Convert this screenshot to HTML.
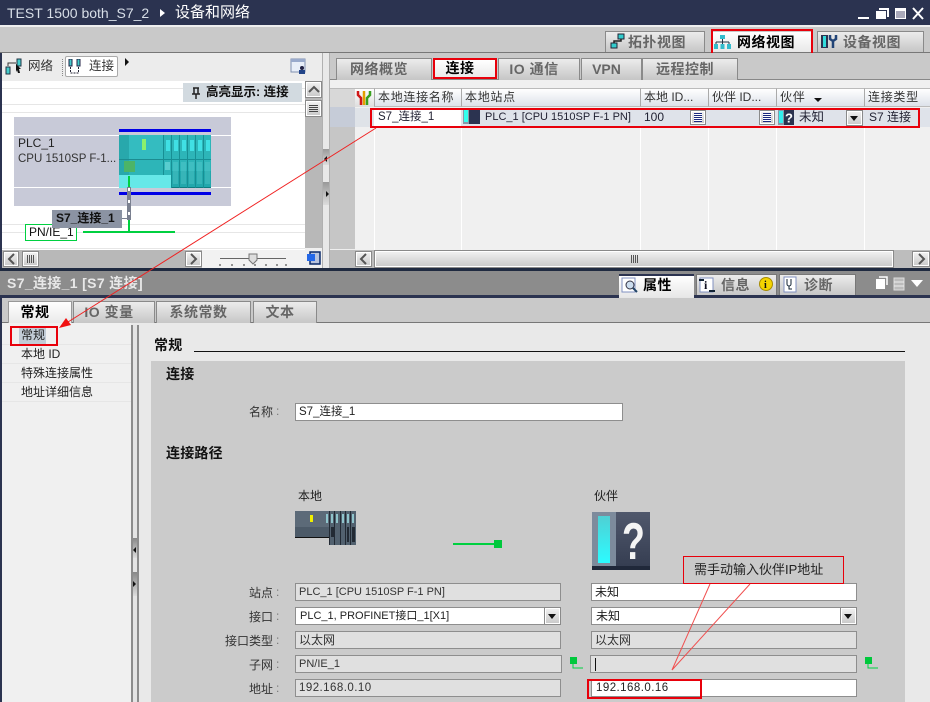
<!DOCTYPE html>
<html><head><meta charset="utf-8"><style>
*{box-sizing:border-box}
html,body{margin:0;padding:0}
body{width:930px;height:702px;overflow:hidden;position:relative;background:#e8e8e8;font:12px "Liberation Sans","WenQuanYi Zen Hei","Noto Sans CJK SC",sans-serif;color:#222}
.a,.t{position:absolute}
.t{white-space:nowrap;line-height:16px}
.tab{position:absolute;border:2px solid #8a8a8a;border-bottom:none;background:linear-gradient(#ececec,#c6c6c6);color:#666;font-weight:bold;font-size:14px;text-align:center;line-height:20px;white-space:nowrap;letter-spacing:.5px;padding-right:10px}
.on{background:linear-gradient(#fff,#e8e8e8);color:#000}
.fld{position:absolute;height:18px;border:1px solid #8e8e8e;background:#e0e0e0;line-height:16px;padding-left:3px;font-size:11px;white-space:nowrap;color:#333}
.w{background:#fff;color:#222}
.btn{position:absolute;background:linear-gradient(#f2f2f2,#c8c8c8);border:1px solid #8a8a8a;box-shadow:inset 0 0 0 1px #fff}
.hd{position:absolute;top:88px;height:19px;background:linear-gradient(#fff,#dde2ea);border-left:1px solid #aaa;border-top:1px solid #bbb;border-bottom:1px solid #bbb;line-height:17px;padding-left:3px;white-space:nowrap;color:#333;font-size:12px;letter-spacing:.3px}
.r{position:absolute;background:#ced4de}
.lb{position:absolute;left:190px;width:83px;text-align:right;line-height:16px;font-size:12px;color:#333;white-space:nowrap}
.c{position:absolute;left:276px;line-height:16px;font-size:12px;color:#777}
.n{font-size:11.5px;letter-spacing:.45px}
</style></head><body>

<!-- title bar -->
<div class="a" style="left:0;top:0;width:930px;height:25px;background:#2b3350"></div>
<div class="t" style="left:7px;top:5px;color:#d8dfe8;font-size:14px">TEST 1500 both_S7_2</div>
<div class="a" style="left:160px;top:9px;width:0;height:0;border-left:5px solid #fff;border-top:4px solid transparent;border-bottom:4px solid transparent"></div>
<div class="t" style="left:175px;top:5px;color:#fff;font-size:15px">设备和网络</div>
<svg class="a" style="left:850px;top:4px" width="80" height="18"><rect x="8" y="13" width="11" height="2" fill="#fff"/><rect x="26" y="7" width="10" height="8" fill="#fff"/><path d="M29 5h9v8" fill="none" stroke="#fff" stroke-width="2"/><rect x="45" y="4" width="11" height="11" fill="#fff"/><rect x="46" y="7" width="9" height="7" fill="#aab"/><path d="M63 4l10 11M73 4L63 15" stroke="#fff" stroke-width="2"/></svg>

<!-- top toolbar -->
<div class="a" style="left:0;top:25px;width:930px;height:2px;background:#eee"></div>
<div class="a" style="left:0;top:27px;width:930px;height:26px;background:#c9c9c9;border-bottom:1px solid #777"></div>
<div class="tab" style="left:605px;top:31px;width:100px;height:21px;padding:0 0 0 22px;text-align:left;border-width:1px 1px 0">拓扑视图</div>
<div class="tab on" style="left:713px;top:32px;width:98px;height:20px;padding:0 0 0 24px;text-align:left;border:0">网络视图</div>
<div class="tab" style="left:817px;top:31px;width:107px;height:21px;padding:0 0 0 25px;text-align:left;border-width:1px 1px 0">设备视图</div>
<svg class="a" style="left:610px;top:33px" width="20" height="16"><rect x="8" y="1" width="6" height="5" fill="#3cc" stroke="#223"/><rect x="1" y="10" width="6" height="5" fill="#3cc" stroke="#223"/><path d="M11 6v2H4v2" stroke="#222" fill="none" stroke-width="1.500"/></svg>
<svg class="a" style="left:714px;top:34px" width="18" height="16"><rect x="6" y="1" width="5" height="4" fill="#3bc"/><path d="M8.500 5v3M2 8h13M2 8v2M8.500 8v2M15 8v2" stroke="#234" fill="none"/><rect x="0" y="10" width="4" height="5" fill="#3bc"/><rect x="6.500" y="10" width="4" height="5" fill="#3bc"/><rect x="13" y="10" width="4" height="5" fill="#3bc"/></svg>
<svg class="a" style="left:821px;top:34px" width="18" height="15"><rect x="0" y="1" width="7" height="13" fill="#2b3350"/><rect x="2" y="2" width="3" height="11" fill="#3dd"/><path d="M9 1v4l3 2 3-2V1M12 7v7" stroke="#247" stroke-width="2.500" fill="none"/></svg>
<div class="a" style="left:711px;top:29px;width:102px;height:26px;border:2px solid #e8000b"></div>

<!-- left panel -->
<div class="a" style="left:0;top:53px;width:2px;height:217px;background:#2b3350"></div>
<div class="a" style="left:2px;top:53px;width:320px;height:28px;background:#ececec"></div>
<svg class="a" style="left:5px;top:58px" width="18" height="17"><rect x="12" y="1" width="4" height="7" fill="#4cc" stroke="#234"/><rect x="1" y="9" width="4" height="7" fill="#4cc" stroke="#234"/><path d="M3 8V5h8" stroke="#333" fill="none"/><path d="M11 6l5 5-2 0 1 4-2 0-1-3-1 2z" fill="#111"/></svg>
<div class="t" style="left:28px;top:58px;color:#333;font-size:12.500px">网络</div>
<div class="a" style="left:62px;top:59px;height:17px;border-left:1px dotted #888"></div>
<div class="a" style="left:65px;top:56px;width:53px;height:21px;background:#fff;border:1px solid #aaa;border-radius:2px"></div>
<svg class="a" style="left:68px;top:59px" width="14" height="16"><rect x="1" y="0" width="3" height="7" fill="#4cc" stroke="#224"/><rect x="9" y="0" width="3" height="7" fill="#4cc" stroke="#224"/><path d="M2.500 8v6M10.500 8v6M2.500 14h8" stroke="#223" stroke-dasharray="2 1" fill="none"/></svg>
<div class="t" style="left:89px;top:58px;color:#333;font-size:12.500px">连接</div>
<div class="a" style="left:125px;top:58px;width:0;height:0;border-left:4px solid #111;border-top:4px solid transparent;border-bottom:4px solid transparent"></div>
<svg class="a" style="left:290px;top:58px" width="18" height="18"><rect x="1" y="1" width="14" height="13" fill="#e8eef8" stroke="#8090b0"/><rect x="1" y="1" width="14" height="3" fill="#99aacc"/><circle cx="12" cy="10" r="2" fill="#224"/><rect x="9" y="12" width="6" height="4" fill="#248"/></svg>

<div class="a" style="left:2px;top:81px;width:303px;height:169px;background:#fff"></div>
<div class="a" style="left:2px;top:88px;width:303px;height:1px;background:#e6e6e6"></div>
<div class="a" style="left:2px;top:104px;width:303px;height:1px;background:#e6e6e6"></div>
<div class="a" style="left:2px;top:112px;width:303px;height:1px;background:#e6e6e6"></div>
<div class="a" style="left:2px;top:224px;width:303px;height:1px;background:#e6e6e6"></div>
<div class="a" style="left:2px;top:232px;width:303px;height:1px;background:#e6e6e6"></div>
<div class="a" style="left:2px;top:248px;width:303px;height:1px;background:#e6e6e6"></div>

<div class="a" style="left:183px;top:83px;width:119px;height:19px;background:#d2dae0"></div>
<svg class="a" style="left:189px;top:86px" width="14" height="14"><path d="M4 2h6M5 2v6M9 2v6M3 8h8M7 8v5" stroke="#222" stroke-width="1.500" fill="none"/></svg>
<div class="t" style="left:206px;top:84px;font-weight:bold;color:#111;font-size:12.500px">高亮显示: 连接</div>

<!-- plc -->
<div class="a" style="left:14px;top:117px;width:217px;height:89px;background:#c8cad8"></div>
<div class="a" style="left:14px;top:135px;width:217px;height:1px;background:#fff"></div>
<div class="a" style="left:14px;top:187px;width:217px;height:1px;background:#fff"></div>
<div class="t" style="left:18px;top:135px;font-size:12px;color:#222">PLC_1</div>
<div class="t" style="left:18px;top:151px;font-size:11.500px;color:#333">CPU 1510SP F-1...</div>
<svg class="a" style="left:119px;top:129px" width="93" height="66">
<rect x="0" y="0" width="92" height="3" fill="#0000e6"/><rect x="0" y="63" width="92" height="3" fill="#0000e6"/>
<rect x="0" y="6" width="92" height="53" fill="#2db5b8"/>
<rect x="0" y="6" width="10" height="53" fill="#28a8ac"/><rect x="10" y="6" width="34" height="24" fill="#34bcc0"/>
<rect x="23" y="10" width="4" height="11" fill="#8cf06c"/>
<rect x="0" y="30" width="52" height="1" fill="#1c8c90"/>
<rect x="5" y="32" width="11" height="11" fill="#4cb468"/>
<rect x="0" y="46" width="52" height="13" fill="#66e8e8"/>
<rect x="52" y="42" width="40" height="17" fill="#22a8ac"/>
<rect x="52" y="58" width="40" height="1" fill="#0e7c80"/>
<g fill="#40e0e4"><rect x="47" y="11" width="4" height="11"/><rect x="55" y="11" width="4" height="11"/><rect x="63" y="11" width="4" height="11"/><rect x="71" y="11" width="4" height="11"/><rect x="79" y="11" width="4" height="11"/><rect x="87" y="11" width="4" height="11"/></g>
<g fill="#178f94"><rect x="44" y="6" width="1" height="40"/><rect x="52" y="6" width="1" height="53"/><rect x="60" y="6" width="1" height="53"/><rect x="68" y="6" width="1" height="53"/><rect x="76" y="6" width="1" height="53"/><rect x="84" y="6" width="1" height="53"/><rect x="44" y="30" width="48" height="1"/></g>
<g fill="#7dd"><rect x="46" y="33" width="5" height="8" opacity=".6"/><rect x="54" y="33" width="5" height="22" opacity=".25"/><rect x="62" y="33" width="5" height="22" opacity=".25"/><rect x="70" y="33" width="5" height="22" opacity=".25"/><rect x="78" y="33" width="5" height="22" opacity=".25"/><rect x="86" y="33" width="5" height="22" opacity=".25"/></g>
</svg>
<div class="a" style="left:128px;top:176px;width:2px;height:56px;background:#00d040"></div>
<div class="a" style="left:127px;top:187px;width:4px;height:33px;background:repeating-linear-gradient(#fff 0 3px,#7a8090 3px 12px);border:1px solid #7a8090"></div>
<div class="a" style="left:122px;top:218px;width:6px;height:1px;background:#7a8090"></div>
<div class="a" style="left:83px;top:231px;width:92px;height:2px;background:#00d040"></div>
<div class="t" style="left:25px;top:224px;width:52px;height:17px;background:#fff;border:1px solid #00d040;line-height:15px;padding-left:3px;color:#111;font-size:12px">PN/IE_1</div>
<div class="t" style="left:52px;top:210px;width:70px;height:18px;background:#8b93a3;padding-left:4px;line-height:17px;font-weight:bold;color:#111;font-size:12px">S7_连接_1</div>

<!-- left scrollbars -->
<div class="a" style="left:305px;top:81px;width:17px;height:187px;background:#b8b8b8"></div>
<div class="btn" style="left:305px;top:81px;width:17px;height:17px"></div>
<svg class="a" style="left:308px;top:85px" width="12" height="9"><path d="M1 7l5-5 5 5" stroke="#555" stroke-width="2" fill="none"/></svg>
<div class="btn" style="left:305px;top:100px;width:17px;height:17px"></div>
<div class="a" style="left:309px;top:105px;width:9px;height:7px;background:repeating-linear-gradient(#444 0 1px,transparent 1px 2px)"></div>
<div class="a" style="left:2px;top:250px;width:303px;height:18px;background:#b8b8b8"></div>
<div class="a" style="left:305px;top:248px;width:17px;height:20px;background:#f0f0f0"></div>
<div class="btn" style="left:3px;top:251px;width:16px;height:16px"></div>
<svg class="a" style="left:7px;top:253px" width="9" height="12"><path d="M7 1L2 6l5 5" stroke="#555" stroke-width="2" fill="none"/></svg>
<div class="btn" style="left:22px;top:251px;width:17px;height:16px"></div>
<div class="a" style="left:27px;top:255px;width:7px;height:8px;background:repeating-linear-gradient(90deg,#555 0 1px,transparent 1px 2px)"></div>
<div class="btn" style="left:185px;top:251px;width:17px;height:16px"></div>
<svg class="a" style="left:189px;top:253px" width="9" height="12"><path d="M2 1l5 5-5 5" stroke="#555" stroke-width="2" fill="none"/></svg>
<div class="a" style="left:202px;top:250px;width:103px;height:18px;background:#f2f2f2"></div>
<svg class="a" style="left:218px;top:250px" width="70" height="18"><path d="M2 8.500h66" stroke="#666"/><path d="M2 14v2M14 14v2M26 14v2M37 14v2M48 14v2M59 14v2M68 14v2" stroke="#333"/><path d="M31 4h8v6l-4 4-4-4z" fill="#ddd" stroke="#777"/></svg>
<svg class="a" style="left:306px;top:251px" width="15" height="15"><rect x="4" y="1" width="10" height="12" fill="#b9c4dd" stroke="#0a2a6a" stroke-width="1.500"/><rect x="1" y="3" width="8" height="7" fill="#2468e8"/></svg>

<!-- divider -->
<div class="a" style="left:322px;top:53px;width:8px;height:215px;background:#e8e8e8;border-left:1px solid #b0b0b0;border-right:1px solid #b0b0b0"></div>
<div class="a" style="left:323px;top:149px;width:6px;height:16px;background:linear-gradient(#999,#ddd)"></div>
<div class="a" style="left:323px;top:182px;width:6px;height:23px;background:linear-gradient(#999,#ddd)"></div>
<div class="a" style="left:324px;top:156px;width:0;height:0;border-right:3px solid #111;border-top:3px solid transparent;border-bottom:3px solid transparent"></div>
<div class="a" style="left:326px;top:191px;width:0;height:0;border-left:3px solid #111;border-top:3px solid transparent;border-bottom:3px solid transparent"></div>

<!-- right panel -->
<div class="a" style="left:330px;top:53px;width:600px;height:27px;background:#c9c9c9;border-bottom:1px solid #888"></div>
<div class="tab" style="left:336px;top:58px;width:96px;height:22px;border-width:1px 1px 0">网络概览</div>
<div class="tab on" style="left:435px;top:60px;width:60px;height:19px;line-height:17px;border:0">连接</div>
<div class="tab" style="left:498px;top:58px;width:82px;height:22px;border-width:1px 1px 0">IO 通信</div>
<div class="tab" style="left:581px;top:58px;width:61px;height:22px;border-width:1px 1px 0;letter-spacing:0">VPN</div>
<div class="tab" style="left:642px;top:58px;width:96px;height:22px;border-width:1px 1px 0">远程控制</div>
<div class="a" style="left:433px;top:58px;width:64px;height:21px;border:2px solid #e8000b"></div>

<div class="a" style="left:330px;top:80px;width:600px;height:170px;background:#f0f0f0"></div>
<div class="a" style="left:330px;top:88px;width:25px;height:19px;background:#d8d8d8;border-top:1px solid #bbb"></div>
<div class="a" style="left:355px;top:88px;width:19px;height:19px;background:linear-gradient(#fff,#ddd);border-top:1px solid #bbb"></div>
<svg class="a" style="left:356px;top:90px" width="16" height="16"><path d="M2 1v4l3 3v7" stroke="#d01818" stroke-width="2.500" fill="none"/><path d="M8 1v5l0 9" stroke="#e4a000" stroke-width="2.500" fill="none"/><path d="M14 1v4l-3 3v7" stroke="#38a020" stroke-width="2.500" fill="none"/></svg>
<div class="hd" style="left:374px;width:87px;letter-spacing:.7px">本地连接名称</div>
<div class="hd" style="left:461px;width:179px;letter-spacing:.7px">本地站点</div>
<div class="hd" style="left:640px;width:68px;letter-spacing:0">本地 ID...</div>
<div class="hd" style="left:708px;width:68px;letter-spacing:0">伙伴 ID...</div>
<div class="hd" style="left:776px;width:88px;letter-spacing:.7px">伙伴</div>
<div class="a" style="left:814px;top:98px;width:0;height:0;border-top:4px solid #111;border-left:4px solid transparent;border-right:4px solid transparent"></div>
<div class="hd" style="left:864px;width:66px;letter-spacing:.7px">连接类型</div>
<div class="r" style="left:355px;top:108px;width:19px;height:19px;background:#dfe3e8"></div>
<div class="r" style="left:374px;top:108px;width:87px;height:19px;background:#fff"></div>
<div class="r" style="left:461px;top:108px;width:469px;height:19px;background:#dfe3ea"></div>
<div class="t" style="left:378px;top:109px;color:#223;font-size:11.500px">S7_连接_1</div>
<svg class="a" style="left:463px;top:109px" width="17" height="15"><rect width="17" height="15" fill="#2b3350"/><rect width="6" height="15" fill="#8a98a8"/><rect x="1" y="1" width="4" height="12" fill="#3fe"/></svg>
<div class="t" style="left:485px;top:109px;font-size:11px;color:#223">PLC_1 [CPU 1510SP F-1 PN]</div>
<div class="t" style="left:644px;top:109px;color:#223">100</div>
<div class="btn" style="left:690px;top:110px;width:16px;height:15px"></div>
<div class="a" style="left:694px;top:113px;width:8px;height:9px;background:repeating-linear-gradient(#1a2a80 0 1px,#fff 1px 2px)"></div>
<div class="btn" style="left:759px;top:110px;width:16px;height:15px"></div>
<div class="a" style="left:763px;top:113px;width:8px;height:9px;background:repeating-linear-gradient(#1a2a80 0 1px,#fff 1px 2px)"></div>
<svg class="a" style="left:778px;top:110px" width="16" height="15"><rect width="16" height="15" fill="#2b3350"/><rect width="6" height="15" fill="#8a98a8"/><rect x="1" y="1" width="4" height="12" fill="#3ee"/><text x="7" y="12.500" font-size="13" font-weight="bold" fill="#fff" font-family="Liberation Sans">?</text></svg>
<div class="t" style="left:799px;top:109px;color:#223;font-size:12.500px">未知</div>
<div class="btn" style="left:846px;top:110px;width:17px;height:16px"></div>
<div class="a" style="left:850px;top:116px;width:0;height:0;border-top:5px solid #111;border-left:4px solid transparent;border-right:4px solid transparent"></div>
<div class="t" style="left:869px;top:109px;color:#223">S7 连接</div>
<div class="a" style="left:374px;top:127px;width:1px;height:123px;background:#fff"></div>
<div class="a" style="left:461px;top:127px;width:1px;height:123px;background:#fff"></div>
<div class="a" style="left:640px;top:127px;width:1px;height:123px;background:#fff"></div>
<div class="a" style="left:708px;top:127px;width:1px;height:123px;background:#fff"></div>
<div class="a" style="left:776px;top:127px;width:1px;height:123px;background:#fff"></div>
<div class="a" style="left:864px;top:127px;width:1px;height:123px;background:#fff"></div>

<div class="a" style="left:330px;top:107px;width:25px;height:161px;background:#c6c6c6;border-top:20px solid #c6ccd8"></div>
<div class="a" style="left:370px;top:108px;width:550px;height:20px;border:2px solid #e8000b"></div>
<div class="a" style="left:330px;top:250px;width:600px;height:18px;background:#bdbdbd"></div>
<div class="a" style="left:330px;top:249px;width:25px;height:1px;background:#eee"></div>
<div class="btn" style="left:355px;top:251px;width:17px;height:16px"></div>
<svg class="a" style="left:359px;top:253px" width="9" height="12"><path d="M7 1L2 6l5 5" stroke="#555" stroke-width="2" fill="none"/></svg>
<div class="btn" style="left:374px;top:250px;width:520px;height:18px"></div>
<div class="a" style="left:631px;top:255px;width:7px;height:8px;background:repeating-linear-gradient(90deg,#555 0 1px,transparent 1px 2px)"></div>
<div class="btn" style="left:912px;top:251px;width:18px;height:16px"></div>
<svg class="a" style="left:917px;top:253px" width="9" height="12"><path d="M2 1l5 5-5 5" stroke="#555" stroke-width="2" fill="none"/></svg>

<!-- inspector -->
<div class="a" style="left:0;top:268px;width:930px;height:3px;background:#1f2a40"></div>
<div class="a" style="left:0;top:271px;width:930px;height:25px;background:#8c8c8c"></div>
<div class="a" style="left:0;top:295px;width:930px;height:3px;background:#2b3350"></div>
<div class="t" style="left:7px;top:275px;color:#e8e8e8;font-size:14px;font-weight:bold;letter-spacing:.35px">S7_连接_1 [S7 连接]</div>
<div class="a" style="left:619px;top:274px;width:75px;height:24px;background:linear-gradient(#fff,#e6e6e6);border-top:2px solid #2b3350"></div>
<div class="t" style="left:643px;top:277px;font-size:14px;font-weight:bold;color:#000;letter-spacing:.5px">属性</div>
<svg class="a" style="left:621px;top:277px" width="18" height="17"><rect x="1" y="1" width="13" height="14" fill="#fff" stroke="#8090c0"/><circle cx="9" cy="8" r="4" fill="#cde" stroke="#334"/><path d="M12 11l4 4" stroke="#246" stroke-width="2"/></svg>
<div class="a" style="left:696px;top:274px;width:81px;height:21px;background:linear-gradient(#ececec,#c6c6c6);border:1px solid #777;border-bottom:0"></div>
<svg class="a" style="left:698px;top:276px" width="18" height="18"><rect x="2" y="2" width="13" height="14" fill="#fff" stroke="#8090c0"/><text x="6" y="13" font-size="12" font-weight="bold" font-family="Liberation Serif" fill="#112">i</text><path d="M1 4h5M11 15h6" stroke="#123" stroke-width="2"/></svg>
<div class="t" style="left:721px;top:277px;font-size:14px;font-weight:bold;color:#666;letter-spacing:.5px">信息</div>
<svg class="a" style="left:759px;top:277px" width="14" height="14"><circle cx="7" cy="7" r="6.500" fill="#f4d400" stroke="#a88c00"/><text x="5" y="11" font-size="10" font-weight="bold" font-family="Liberation Serif" fill="#111">i</text></svg>
<div class="a" style="left:779px;top:274px;width:77px;height:21px;background:linear-gradient(#ececec,#c6c6c6);border:1px solid #777;border-bottom:0"></div>
<svg class="a" style="left:783px;top:276px" width="14" height="18"><rect x="1" y="1" width="12" height="15" fill="#fff" stroke="#8090c0"/><path d="M4 3v5a2 2 0 0 0 4 0V3M6 10v3h3" stroke="#123" fill="none"/></svg>
<div class="t" style="left:804px;top:277px;font-size:14px;font-weight:bold;color:#666;letter-spacing:.5px">诊断</div>
<svg class="a" style="left:874px;top:276px" width="52" height="16"><rect x="2" y="3" width="9" height="10" fill="#fff"/><path d="M5 1h8v8" fill="none" stroke="#fff" stroke-width="1.500"/><rect x="20" y="2" width="10" height="12" fill="#bbb" stroke="#ddd"/><path d="M20 6h10M20 10h10" stroke="#eee"/><path d="M37 4h12l-6 7z" fill="#fff"/></svg>

<div class="a" style="left:0;top:298px;width:930px;height:25px;background:#c9c9c9;border-bottom:1px solid #777"></div>
<div class="tab on" style="left:8px;top:301px;width:64px;height:23px;border:1px solid #999;border-bottom:0;background:linear-gradient(#fff,#e8e8e8)">常规</div>
<div class="tab" style="left:73px;top:301px;width:82px;height:22px;border-width:1px 1px 0">IO 变量</div>
<div class="tab" style="left:156px;top:301px;width:95px;height:22px;border-width:1px 1px 0">系统常数</div>
<div class="tab" style="left:253px;top:301px;width:64px;height:22px;border-width:1px 1px 0">文本</div>

<div class="a" style="left:0;top:323px;width:930px;height:379px;background:#e9e9e9"></div>
<div class="a" style="left:0;top:296px;width:2px;height:406px;background:#2b3350"></div>
<div class="a" style="left:2px;top:323px;width:129px;height:379px;background:#f0f0f0"></div>
<div class="a" style="left:131px;top:325px;width:8px;height:377px;background:#e4e4e4;border-left:2px solid #8c8c8c;border-right:2px solid #8c8c8c"></div>
<div class="a" style="left:133px;top:538px;width:4px;height:20px;background:linear-gradient(#888,#ddd)"></div>
<div class="a" style="left:133px;top:572px;width:4px;height:24px;background:linear-gradient(#888,#ddd)"></div>
<div class="a" style="left:133px;top:547px;width:0;height:0;border-right:3px solid #111;border-top:3px solid transparent;border-bottom:3px solid transparent"></div>
<div class="a" style="left:133px;top:581px;width:0;height:0;border-left:3px solid #111;border-top:3px solid transparent;border-bottom:3px solid transparent"></div>
<div class="a" style="left:2px;top:344px;width:129px;height:1px;background:#e6e6e6"></div>
<div class="a" style="left:2px;top:363px;width:129px;height:1px;background:#e6e6e6"></div>
<div class="a" style="left:2px;top:382px;width:129px;height:1px;background:#e6e6e6"></div>
<div class="a" style="left:2px;top:401px;width:129px;height:1px;background:#e6e6e6"></div>
<div class="a" style="left:19px;top:327px;width:27px;height:17px;background:#c2ccd6"></div>
<div class="t" style="left:21px;top:327px;color:#222">常规</div>
<div class="t" style="left:21px;top:346px;color:#222">本地 ID</div>
<div class="t" style="left:21px;top:365px;color:#222">特殊连接属性</div>
<div class="t" style="left:21px;top:384px;color:#222">地址详细信息</div>
<div class="a" style="left:10px;top:326px;width:48px;height:20px;border:2px solid #e8000b"></div>

<div class="t" style="left:154px;top:337px;font-weight:bold;font-size:14px;color:#111;letter-spacing:.2px">常规</div>
<div class="a" style="left:194px;top:351px;width:711px;height:1px;background:#111"></div>
<div class="a" style="left:151px;top:361px;width:754px;height:341px;background:#cbcbcb"></div>
<div class="t" style="left:166px;top:366px;font-weight:bold;font-size:14px;color:#111;letter-spacing:.2px">连接</div>
<div class="lb" style="top:404px">名称</div><div class="c" style="top:403px">:</div>
<div class="fld w" style="left:295px;top:403px;width:328px;font-size:11.500px">S7_连接_1</div>
<div class="t" style="left:166px;top:445px;font-weight:bold;font-size:14px;color:#111;letter-spacing:.2px">连接路径</div>
<div class="t" style="left:298px;top:488px;color:#222">本地</div>
<div class="t" style="left:594px;top:488px;color:#222">伙伴</div>

<svg class="a" style="left:295px;top:511px" width="61" height="35">
<rect width="35" height="27" fill="#5c6a78"/><rect y="16" width="35" height="11" fill="#4c5a68"/><rect y="26" width="34" height="1" fill="#111"/>
<rect x="15" y="4" width="3" height="7" fill="#f0f000"/>
<rect x="34" y="0" width="27" height="34" fill="#52616f"/>
<g fill="#8fc4cc"><rect x="31" y="3" width="2" height="9"/><rect x="36" y="3" width="2" height="9"/><rect x="41" y="3" width="2" height="9"/><rect x="47" y="3" width="2" height="9"/><rect x="52" y="3" width="2" height="9"/><rect x="57" y="3" width="2" height="9"/></g>
<g fill="#222a34"><rect x="34" y="0" width="1" height="34"/><rect x="39" y="0" width="1" height="34"/><rect x="45" y="0" width="1" height="34"/><rect x="50" y="0" width="1" height="34"/><rect x="55" y="0" width="1" height="34"/><rect x="36" y="16" width="3" height="10"/><rect x="52" y="16" width="2" height="15"/><rect x="57" y="16" width="3" height="15"/></g>
</svg>
<svg class="a" style="left:592px;top:512px" width="58" height="59">
<defs><linearGradient id="g1" x1="0" y1="0" x2="0" y2="1"><stop offset="0" stop-color="#4fd0d4"/><stop offset="1" stop-color="#2cfbff"/></linearGradient><linearGradient id="g2" x1="0" y1="0" x2="0" y2="1"><stop offset="0" stop-color="#50586c"/><stop offset="1" stop-color="#343c50"/></linearGradient></defs>
<rect width="24" height="58" fill="#7d8b9c"/><rect x="6" y="4" width="12" height="47" fill="url(#g1)"/>
<rect x="24" width="34" height="58" fill="url(#g2)"/><rect y="54" width="58" height="4" fill="#20283a"/>
<text transform="translate(30,47) scale(.72,1)" font-size="52" font-weight="bold" fill="#f4f4f4" font-family="Liberation Sans">?</text>
</svg>
<div class="a" style="left:453px;top:543px;width:42px;height:2px;background:#00d040"></div>
<div class="a" style="left:494px;top:540px;width:8px;height:8px;background:#00c83c"></div>

<div class="lb" style="top:585px">站点</div><div class="c" style="top:584px">:</div>
<div class="lb" style="top:609px">接口</div><div class="c" style="top:608px">:</div>
<div class="lb" style="top:633px">接口类型</div><div class="c" style="top:632px">:</div>
<div class="lb" style="top:657px">子网</div><div class="c" style="top:656px">:</div>
<div class="lb" style="top:681px">地址</div><div class="c" style="top:680px">:</div>

<div class="fld" style="left:295px;top:583px;width:266px">PLC_1 [CPU 1510SP F-1 PN]</div>
<div class="fld w" style="left:295px;top:607px;width:266px;padding-left:4px">PLC_1, PROFINET接口_1[X1]</div>
<div class="btn" style="left:544px;top:607px;width:17px;height:18px"></div>
<div class="a" style="left:548px;top:614px;width:0;height:0;border-top:5px solid #111;border-left:4px solid transparent;border-right:4px solid transparent"></div>
<div class="fld" style="left:295px;top:631px;width:266px;font-size:12px">以太网</div>
<div class="fld" style="left:295px;top:655px;width:267px">PN/IE_1</div>
<div class="fld n" style="left:295px;top:679px;width:266px">192.168.0.10</div>

<div class="fld w" style="left:591px;top:583px;width:266px;font-size:12px">未知</div>
<div class="fld w" style="left:591px;top:607px;width:266px;font-size:12px;padding-left:4px">未知</div>
<div class="btn" style="left:840px;top:607px;width:17px;height:18px"></div>
<div class="a" style="left:844px;top:614px;width:0;height:0;border-top:5px solid #111;border-left:4px solid transparent;border-right:4px solid transparent"></div>
<div class="fld" style="left:591px;top:631px;width:266px;font-size:12px">以太网</div>
<div class="fld" style="left:590px;top:655px;width:267px"><span style="display:inline-block;width:1px;height:13px;background:#111;margin-left:1px;vertical-align:middle"></span></div>
<div class="fld w n" style="left:591px;top:679px;width:266px;padding-left:4px">192.168.0.16</div>
<div class="a" style="left:587px;top:679px;width:115px;height:20px;border:2px solid #e8000b"></div>

<svg class="a" style="left:570px;top:656px" width="14" height="14"><rect x="0" y="1" width="7" height="7" fill="#00c83c"/><path d="M3 8v4h10" stroke="#00d040" fill="none"/></svg>
<svg class="a" style="left:865px;top:656px" width="14" height="14"><rect x="0" y="1" width="7" height="7" fill="#00c83c"/><path d="M3 8v4h10" stroke="#00d040" fill="none"/></svg>

<div class="t" style="left:683px;top:556px;width:161px;height:28px;border:1px solid #e8000b;background:#c9c9c9;line-height:26px;padding-left:10px;color:#222;font-size:13px">需手动输入伙伴IP地址</div>

<!-- annotation lines -->
<svg class="a" style="left:0;top:0" width="930" height="702">
<path d="M376 128L68 322" stroke="#f02020" stroke-width="1" fill="none"/>
<path d="M59 328l7-10 5 7z" fill="#f01010"/>
<path d="M710 584L672 670L750 584" stroke="#f05050" stroke-width="1" fill="none"/>
</svg>
</body></html>
